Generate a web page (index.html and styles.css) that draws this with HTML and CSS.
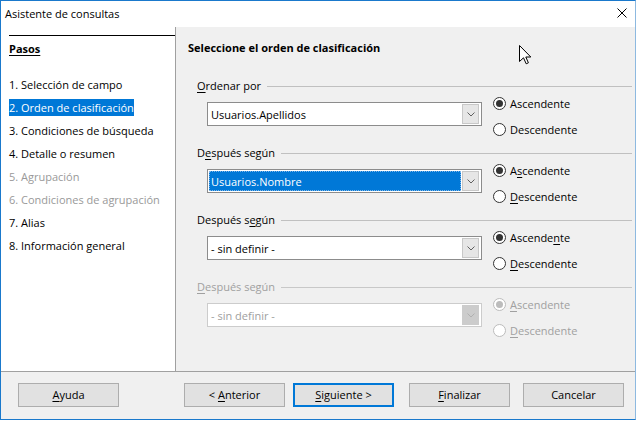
FILE: index.html
```html
<!DOCTYPE html>
<html lang="es">

<head>
    <meta charset="UTF-8">
    <title>Asistente de consultas</title>
    <link rel="stylesheet" href="styles.css">
</head>

<body>
    <div class="window">
        <div class="titlebar">
            <span class="title">Asistente de consultas</span>
            <svg class="close" width="10" height="10" viewBox="0 0 10 10">
                <path d="M0.5 0.5 L9.5 9.5 M9.5 0.5 L0.5 9.5" stroke="#000" stroke-width="1" fill="none" />
            </svg>
        </div>
        <div class="main">
            <!-- pasos del asistente -->
            <div class="steps">
                <div class="steps-head">Pasos</div>
                <ul class="step-list">
                    <li>1. Selección de campo</li>
                    <li><span class="current">2. Orden de clasificación</span></li>
                    <li>3. Condiciones de búsqueda</li>
                    <li>4. Detalle o resumen</li>
                    <li class="off">5. Agrupación</li>
                    <li class="off">6. Condiciones de agrupación</li>
                    <li>7. Alias</li>
                    <li>8. Información general</li>
                </ul>
            </div>
            <!-- página actual -->
            <div class="page">
                <div class="page-title">Seleccione el orden de clasificación</div>

                <div class="group">
                    <div class="group-label"><span><u>O</u>rdenar por</span></div>
                    <div class="group-row">
                        <div class="combo">
                            <span class="combo-text">Usuarios.Apellidos</span>
                            <span class="combo-btn"><svg width="8" height="5" viewBox="0 0 8 5"><path d="M0.5 0.5 L4 4 L7.5 0.5" stroke="#606060" fill="none" /></svg></span>
                        </div>
                        <div class="radios">
                            <div class="radio checked"><span class="dot"></span><span>Ascendente</span></div>
                            <div class="radio"><span class="dot"></span><span>Descendente</span></div>
                        </div>
                    </div>
                </div>

                <div class="group">
                    <div class="group-label"><span>D<u>e</u>spués según</span></div>
                    <div class="group-row">
                        <div class="combo">
                            <span class="combo-text selected">Usuarios.Nombre</span>
                            <span class="combo-btn"><svg width="8" height="5" viewBox="0 0 8 5"><path d="M0.5 0.5 L4 4 L7.5 0.5" stroke="#606060" fill="none" /></svg></span>
                        </div>
                        <div class="radios">
                            <div class="radio checked"><span class="dot"></span><span>A<u>s</u>cendente</span></div>
                            <div class="radio"><span class="dot"></span><span><u>D</u>escendente</span></div>
                        </div>
                    </div>
                </div>

                <div class="group">
                    <div class="group-label"><span>Después s<u>e</u>gún</span></div>
                    <div class="group-row">
                        <div class="combo">
                            <span class="combo-text">- sin definir -</span>
                            <span class="combo-btn"><svg width="8" height="5" viewBox="0 0 8 5"><path d="M0.5 0.5 L4 4 L7.5 0.5" stroke="#606060" fill="none" /></svg></span>
                        </div>
                        <div class="radios">
                            <div class="radio checked"><span class="dot"></span><span>Ascende<u>n</u>te</span></div>
                            <div class="radio"><span class="dot"></span><span><u>D</u>escendente</span></div>
                        </div>
                    </div>
                </div>

                <div class="group disabled">
                    <div class="group-label"><span><u>D</u>espués según</span></div>
                    <div class="group-row">
                        <div class="combo">
                            <span class="combo-text">- sin definir -</span>
                            <span class="combo-btn"><svg width="8" height="5" viewBox="0 0 8 5"><path d="M0.5 0.5 L4 4 L7.5 0.5" stroke="#b0b0b0" fill="none" /></svg></span>
                        </div>
                        <div class="radios">
                            <div class="radio checked"><span class="dot"></span><span><u>A</u>scendente</span></div>
                            <div class="radio"><span class="dot"></span><span><u>D</u>escendente</span></div>
                        </div>
                    </div>
                </div>
            </div>
        </div>
        <div class="footer">
            <div class="btn btn-help"><span><u>A</u>yuda</span></div>
            <div class="btn btn-prev"><span>&lt; <u>A</u>nterior</span></div>
            <div class="btn btn-next default"><span><u>S</u>iguiente &gt;</span></div>
            <div class="btn btn-finish"><span><u>F</u>inalizar</span></div>
            <div class="btn btn-cancel"><span>Cancelar</span></div>
        </div>
        <!-- puntero del ratón -->
        <svg class="cursor" width="13" height="20" viewBox="0 0 13 20">
            <path d="M0.5 0.5 L0.5 16.5 L4.5 12.8 L7.2 18.8 L9.4 17.8 L6.8 12 L11.8 12 Z" fill="#fff" stroke="#000" stroke-width="1" stroke-linejoin="miter" />
        </svg>
    </div>
</body>

</html>
```
FILE: styles.css
```css
body {
    margin: 0;
    background-color: #fff;
    font-family: "Open Sans", "Noto Sans", sans-serif;
    font-size: 11px;
    color: #000;
}

u {
    text-decoration: underline;
    text-underline-offset: 2px;
}

.window {
    position: relative;
    display: flex;
    flex-direction: column;
    width: 636px;
    height: 420px;
    box-sizing: border-box;
    border: 1px solid #1a79cc;
    border-right-color: #8db9e0;
    background-color: #f0f0f0;
}

.titlebar {
    display: flex;
    align-items: center;
    justify-content: space-between;
    height: 26px;
    box-sizing: border-box;
    padding: 0 8px 2px 4px;
    background-color: #fff;
}

.main {
    display: flex;
    height: 344px;
    border-bottom: 1px solid #a0a0a0;
}

.steps {
    width: 175px;
    box-sizing: border-box;
    padding: 8px 0 0 8px;
    background-color: #fff;
    border-right: 1px solid #a0a0a0;
}

.steps-head {
    border-top: 1px solid #000;
    padding-top: 5px;
    line-height: 16px;
    font-weight: bold;
    text-decoration: underline;
    text-underline-offset: 2px;
}

.step-list {
    list-style: none;
    margin: 16px 0 0;
    padding: 0;
}

.step-list li {
    height: 23px;
    line-height: 23px;
}

.step-list li.off {
    color: #999;
}

.step-list .current {
    background-color: #0078d7;
    color: #fff;
    padding: 1px 0;
}

.page {
    flex: 1;
    padding: 13px 3px 0 12px;
}

.page-title {
    font-weight: bold;
    line-height: 16px;
    margin-bottom: 22px;
}

.group {
    margin: 0 0 7px 9px;
}

.group-label {
    display: flex;
    align-items: center;
    line-height: 16px;
}

.group-label::after {
    content: "";
    flex: 1;
    margin-left: 6px;
    border-top: 1px solid #c0c0c0;
}

.group-row {
    display: flex;
    padding-left: 10px;
}

.combo {
    display: flex;
    align-items: center;
    width: 275px;
    height: 24px;
    box-sizing: border-box;
    margin-top: 8px;
    padding: 1px 2px 1px 1px;
    border: 1px solid #8c8c8c;
    background-color: #fff;
}

.combo-text {
    flex: 1;
    align-self: stretch;
    display: flex;
    align-items: center;
    padding-left: 2px;
    margin-right: 1px;
}

.combo-text.selected {
    background-color: #0078d7;
    color: #fff;
    outline: 1px dotted #7fb4e6;
    outline-offset: -1px;
}

.combo-btn {
    display: flex;
    align-items: center;
    justify-content: center;
    width: 17px;
    height: 20px;
    box-sizing: border-box;
    border: 1px solid #c8c8c8;
    background-color: #e6e6e6;
}

.radios {
    display: flex;
    flex-direction: column;
    gap: 8px;
    margin-left: 11px;
}

.radio {
    display: flex;
    align-items: center;
    gap: 4px;
    height: 18px;
}

.radio .dot {
    display: flex;
    align-items: center;
    justify-content: center;
    width: 13px;
    height: 13px;
    box-sizing: border-box;
    border: 1px solid #333;
    border-radius: 50%;
    background-color: #fff;
}

.radio.checked .dot::after {
    content: "";
    width: 7px;
    height: 7px;
    border-radius: 50%;
    background-color: #333;
}

/* grupo deshabilitado */
.disabled {
    color: #a0a0a0;
}

.disabled .group-label::after {
    border-top-color: #c8c8c8;
}

.disabled .combo {
    border-color: #cccccc;
    background-color: #fff;
}

.disabled .combo-btn {
    background-color: #cccccc;
    border-color: #cccccc;
}

.disabled .radio .dot {
    border-color: #bcbcbc;
}

.disabled .radio.checked .dot::after {
    background-color: #bcbcbc;
}

.footer {
    flex: 1;
    display: flex;
    align-items: flex-start;
    padding: 11px 0 0 17px;
}

.btn {
    display: flex;
    align-items: center;
    justify-content: center;
    width: 101px;
    height: 24px;
    box-sizing: border-box;
    padding-bottom: 1px;
    border: 1px solid #adadad;
    background-color: #e1e1e1;
}

.btn.default {
    border: 2px solid #0078d7;
}

.btn-prev {
    margin-left: 65px;
}

.btn-next {
    margin-left: 8px;
}

.btn-finish {
    margin-left: 15px;
}

.btn-cancel {
    margin-left: 13px;
}

.cursor {
    position: absolute;
    left: 518px;
    top: 44px;
}
```
